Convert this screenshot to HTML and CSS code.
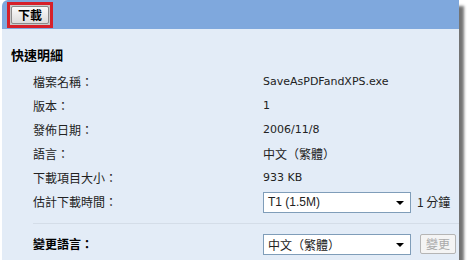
FILE: index.html
```html
<!DOCTYPE html>
<html lang="zh-Hant">
<head>
  <meta charset="UTF-8">
  <title>下載</title>
  <link rel="stylesheet" href="styles.css">
</head>
<body>

<div class="panel">
  <div class="bar">
    <div class="hl">
      <button class="dl-btn">下載</button>
    </div>
  </div>
  <div class="body">
    <h3>快速明細</h3>
    <div class="row"><span class="lbl">檔案名稱：</span><span class="val">SaveAsPDFandXPS.exe</span></div>
    <div class="row"><span class="lbl">版本：</span><span class="val">1</span></div>
    <div class="row"><span class="lbl">發佈日期：</span><span class="val">2006/11/8</span></div>
    <div class="row"><span class="lbl">語言：</span><span class="val cjk">中文（繁體）</span></div>
    <div class="row"><span class="lbl">下載項目大小：</span><span class="val">933 KB</span></div>
    <div class="row">
      <span class="lbl">估計下載時間：</span>
      <span class="val">
        <span class="sel">T1 (1.5M)<i class="arrow"></i></span>
        <span class="mins">1 分鐘</span>
      </span>
    </div>
    <div class="sep"></div>
    <div class="row">
      <span class="lbl bold">變更語言：</span>
      <span class="val">
        <span class="sel cjk-sel">中文（繁體）<i class="arrow"></i></span>
        <span class="btn-off">變更</span>
      </span>
    </div>
  </div>
</div>

</body>
</html>
```

FILE: styles.css
```css
body {
  margin: 0;
  padding: 0;
  background: #fff;
  font-family: "DejaVu Sans", "Noto Sans CJK TC", sans-serif;
  font-size: 11px;
  color: #000;
}
.panel {
  margin-left: 2px;
  width: 457px;
  border-top-left-radius: 6px;
  overflow: hidden;
  box-shadow: 5px 6px 3px rgba(0,0,0,0.55);
}
.bar {
  height: 29px;
  background: #7fa8dd;
  padding: 2px 0 0 5px;
  box-sizing: border-box;
}
.hl {
  display: inline-block;
  border: 3px solid #d6202a;
  padding: 1px;
  background: #c9c9c9;
}
.dl-btn {
  display: block;
  height: 18px;
  width: 38px;
  padding: 0;
  border: 1px solid #8a8a8a;
  border-radius: 2px;
  background: linear-gradient(#fbfbfb, #dcdcdc);
  font-family: "Noto Sans CJK TC", sans-serif;
  font-size: 12px;
  font-weight: bold;
  line-height: 16px;
  color: #000;
}
.body {
  background: #e3ecf7;
  height: 231px;
  padding: 17px 0 0 9px;
  box-sizing: border-box;
}
.body h3 {
  margin: 0 0 6px 0;
  font-family: "Noto Sans CJK TC", sans-serif;
  font-size: 13px;
  font-weight: bold;
  line-height: 18px;
}
.row {
  display: flex;
  align-items: center;
  height: 24px;
  line-height: 16px;
  padding-left: 22px;
}
.lbl {
  width: 230px;
  font-family: "Noto Sans CJK TC", sans-serif;
  font-size: 12px;
  line-height: 16px;
  color: #222;
}
.lbl.bold { font-weight: bold; color: #000; }
.val {
  display: flex;
  align-items: center;
  line-height: 16px;
  color: #222;
}
.cjk { font-family: "Noto Sans CJK TC", sans-serif; font-size: 12px; }
.sel {
  position: relative;
  display: block;
  width: 142px;
  height: 19px;
  border: 1px solid #7f9db9;
  background: #fff;
  padding-left: 4px;
  line-height: 19px;
  font-family: "Liberation Sans", sans-serif;
  font-size: 12px;
  box-sizing: content-box;
}
.sel.cjk-sel { font-family: "Noto Sans CJK TC", sans-serif; font-size: 12px; }
.arrow {
  position: absolute;
  right: 6px;
  top: 8px;
  border-left: 4px solid transparent;
  border-right: 4px solid transparent;
  border-top: 4px solid #000;
}
.mins {
  margin-left: 6px;
  font-family: "Noto Sans CJK TC", sans-serif;
  font-size: 12px;
}
.sep {
  height: 1px;
  background: #d4dde8;
  margin: 9px 0 8px 22px;
}
.btn-off {
  margin-left: 9px;
  width: 34px;
  height: 18px;
  border: 1px solid #b5b5b5;
  border-radius: 2px;
  background: #f4f4f4;
  color: #aaa;
  text-align: center;
  line-height: 18px;
  font-family: "Noto Sans CJK TC", sans-serif;
  font-size: 12px;
}
```
